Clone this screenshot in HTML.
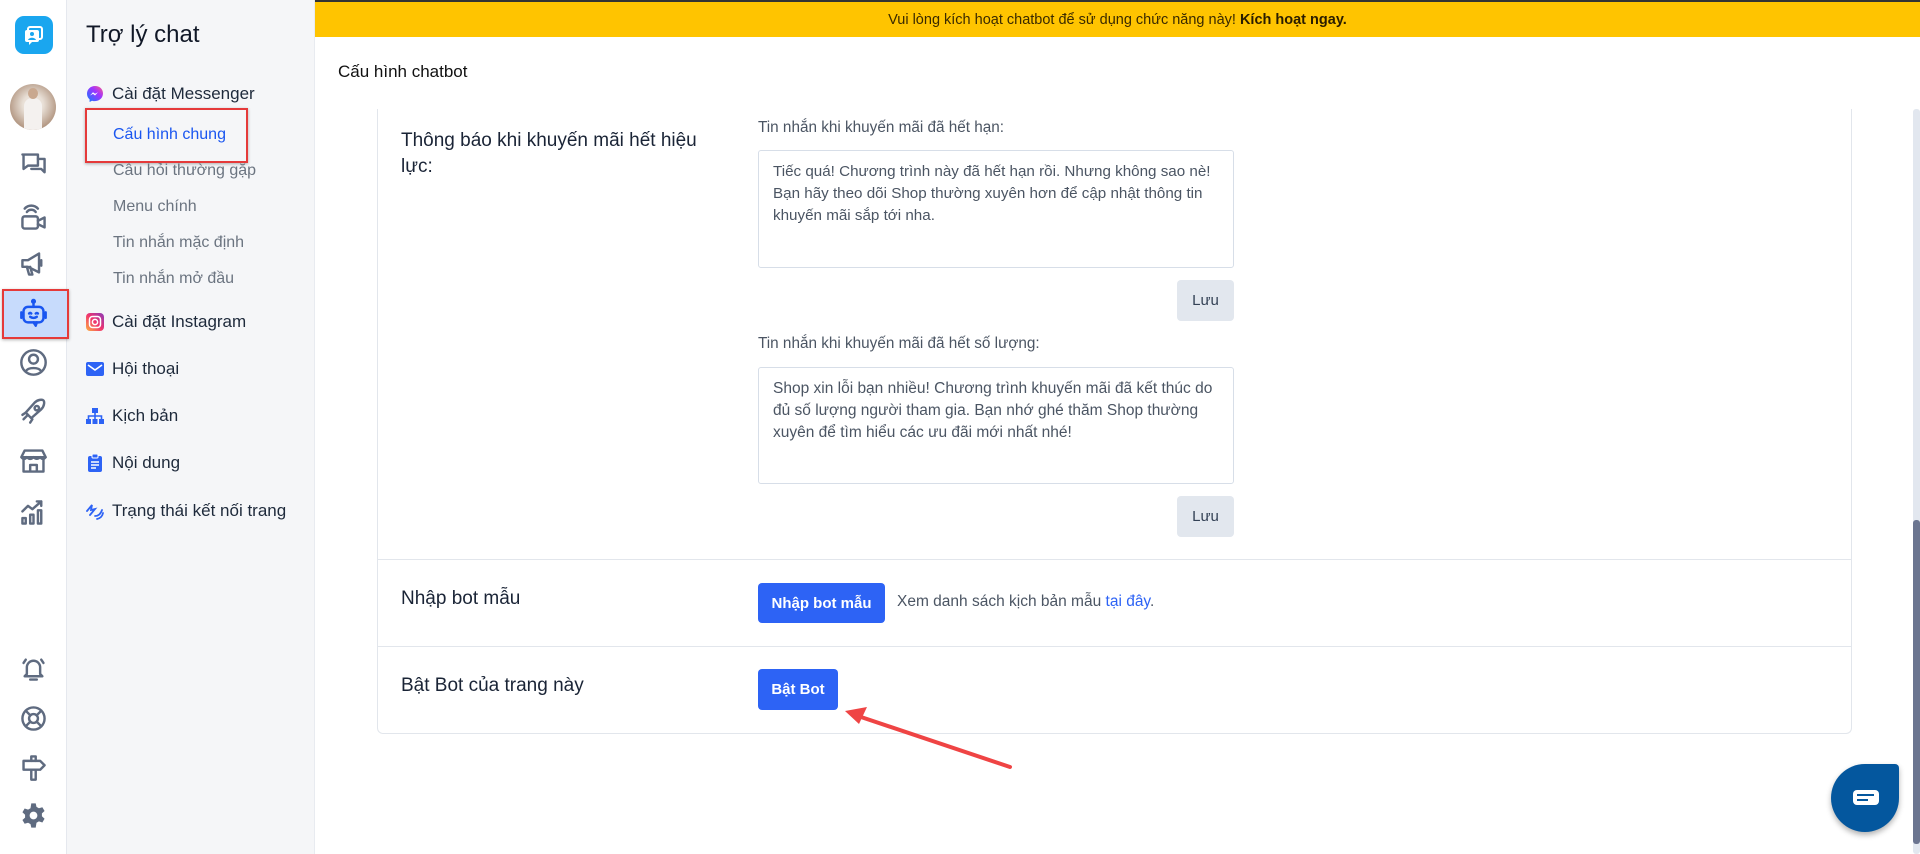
<!DOCTYPE html>
<html><head><meta charset="utf-8">
<style>
*{box-sizing:border-box;margin:0;padding:0}
body{width:1920px;height:854px;overflow:hidden;background:#fff;font-family:"Liberation Sans",sans-serif;position:relative;color:#1f2937}
.abs{position:absolute}
.rail{left:0;top:0;width:67px;height:854px;background:#fff;border-right:1px solid #e5e8ee}
.side{left:67px;top:0;width:248px;height:854px;background:#f5f6f8;border-right:1px solid #e8ebf0}
.ic{position:absolute;left:18px;width:31px;height:31px}
.ic svg{width:31px;height:31px;fill:none;stroke:#5f6b80;stroke-width:2.2;stroke-linecap:round;stroke-linejoin:round}
.mi{position:absolute;left:86px;font-size:17px;color:#1e2a3b;display:flex;align-items:center;gap:8px;white-space:nowrap}
.mi .i{width:18px;height:18px;display:inline-block}
.sub{position:absolute;left:113px;font-size:16px;color:#6b7480}
.lbl{font-size:15.3px;color:#4b5563}
.ta{position:absolute;border:1px solid #d7dee8;border-radius:3px;padding:10px 14px;font-size:15.5px;line-height:22px;color:#4b5563;white-space:nowrap}
.lu{position:absolute;width:57px;height:41px;background:#e2e7ee;border-radius:4px;font-size:15px;color:#334155;display:flex;align-items:center;justify-content:center}
.btn{position:absolute;background:#2d63f5;color:#fff;font-weight:bold;font-size:15px;border-radius:4px;display:flex;align-items:center;justify-content:center}
.rowlbl{position:absolute;left:401px;font-size:19px;color:#1a2436}
</style></head><body>
<div class="abs" style="left:0;top:0;width:1920px;height:2px;background:#333"></div>
<div class="abs rail"></div>
<div class="abs side"></div>

<div class="abs" style="left:15px;top:16px;width:38px;height:38px;border-radius:9px;background:#1aa6ef"></div>
<svg class="abs" style="left:21px;top:22px" width="26" height="26" viewBox="0 0 26 26"><rect x="7" y="5" width="14" height="12" rx="2" fill="none" stroke="#fff" stroke-width="2"/><rect x="4" y="8" width="14" height="12" rx="2" fill="#fff"/><path d="M8 20l0 3 3-3" fill="#fff"/><circle cx="11" cy="12" r="2" fill="#1aa6ef"/><path d="M7 18c1-3 7-3 8 0" fill="#1aa6ef"/></svg>
<div class="abs" style="left:10px;top:84px;width:46px;height:46px;border-radius:50%;background:radial-gradient(circle at 50% 45%,#f3ece6 0,#e8dfd6 30%,#b59a86 70%,#8d7565 100%);overflow:hidden"><div style="position:absolute;left:14px;top:14px;width:18px;height:34px;background:#f4f1ef;border-radius:8px 8px 0 0"></div><div style="position:absolute;left:18px;top:4px;width:10px;height:11px;background:#c9a88f;border-radius:50%"></div></div>

<div class="abs" style="left:2px;top:289px;width:67px;height:50px;background:#c7dbfc;border:2px solid #e53a3a;box-shadow:0 1px 3px rgba(0,0,0,.3)"></div>

<div class="ic" style="top:149px"><svg viewBox="0 0 28 28"><path d="M4 5h14v10H9l-4 3V5z"/><path d="M18 9h6v12l-3-3h-9"/></svg></div>
<div class="ic" style="top:202px"><svg viewBox="0 0 28 28"><path d="M8 9a5 5 0 0 1 8 0M6 6a8 8 0 0 1 12 0"/><rect x="4" y="13" width="14" height="11" rx="2"/><path d="M18 17l6-3v9l-6-3"/></svg></div>
<div class="ic" style="top:248px"><svg viewBox="0 0 28 28"><path d="M4 11h5l10-6v17l-10-5H4z"/><path d="M8 17l2 7h3l-2-7"/><path d="M21 11v5"/></svg></div>
<div class="ic" style="top:298px"><svg viewBox="0 0 28 28" style="stroke:#1a56f0"><rect x="5" y="8" width="18" height="14" rx="4"/><path d="M14 8V4"/><circle cx="14" cy="3" r="1.2"/><path d="M3 13v5M25 13v5M10 14q1-1 2 0M16 14q1-1 2 0M11 17q3 2 6 0M14 22l2 3 1-3"/></svg></div>
<div class="ic" style="top:347px"><svg viewBox="0 0 28 28"><circle cx="14" cy="14" r="11"/><circle cx="14" cy="11" r="4"/><path d="M7 22c2-4 12-4 14 0"/></svg></div>
<div class="ic" style="top:396px"><svg viewBox="0 0 28 28"><path d="M10 18l-3-3 8-9c3-3 7-3 8-2 1 1 1 5-2 8l-9 8z"/><circle cx="17" cy="11" r="2"/><path d="M5 21l4-4M4 17l3-2M11 24l2-3"/></svg></div>
<div class="ic" style="top:445px"><svg viewBox="0 0 28 28"><path d="M3 11l3-6h16l3 6zM3 11q2.5 3 5 0q3 3 6 0q3 3 6 0q2.5 3 5 0"/><path d="M5 13v11h18V13M11 24v-6h6v6"/></svg></div>
<div class="ic" style="top:497px"><svg viewBox="0 0 28 28"><rect x="4" y="19" width="3" height="5"/><rect x="11" y="16" width="3" height="8"/><rect x="18" y="12" width="3" height="12"/><path d="M4 13l5-5 4 3 8-7M17 4h4v4"/></svg></div>

<div class="ic" style="top:653px"><svg viewBox="0 0 28 28"><path d="M8 19v-6a6 6 0 0 1 12 0v6l2 2H6z"/><path d="M11 24h6M5 9l2-3M23 9l-2-3"/></svg></div>
<div class="ic" style="top:703px"><svg viewBox="0 0 28 28"><circle cx="14" cy="14" r="10"/><circle cx="14" cy="14" r="4"/><path d="M7 7l4 4M21 7l-4 4M7 21l4-4M21 21l-4-4"/></svg></div>
<div class="ic" style="top:752px"><svg viewBox="0 0 28 28"><path d="M5 8h15l4 4-4 4H5z"/><path d="M12 16v9h4v-9M12 8V4h4v4"/></svg></div>
<div class="ic" style="top:800px"><svg viewBox="0 0 28 28"><path fill="#5f6b80" stroke="none" fill-rule="evenodd" d="M12 3h4l.7 3.2 2.2 1.3 3.1-1 2 3.4-2.4 2.2v2.6l2.4 2.2-2 3.4-3.1-1-2.2 1.3L16 25h-4l-.7-3.2-2.2-1.3-3.1 1-2-3.4 2.4-2.2v-2.6L4 11.1l2-3.4 3.1 1 2.2-1.3zM14 10.5a3.5 3.5 0 1 0 0 7 3.5 3.5 0 0 0 0-7z"/></svg></div>

<div class="abs" style="left:86px;top:21px;font-size:24px;color:#111827">Trợ lý chat</div>
<div class="mi" style="top:84px"><svg class="i" viewBox="0 0 18 18"><defs><linearGradient id="g" x1="0" y1="1" x2="1" y2="0"><stop offset="0" stop-color="#0a7cff"/><stop offset=".6" stop-color="#a033ff"/><stop offset="1" stop-color="#ff5c87"/></linearGradient></defs><path d="M9 1C4.5 1 1 4.3 1 8.7c0 2.3 1 4.3 2.6 5.7V17l2.4-1.3c.9.3 1.9.4 3 .4 4.5 0 8-3.3 8-7.7S13.5 1 9 1z" fill="url(#g)"/><path d="M4 10.5l3-3.3 2 1.6 3-1.6-3 3.3-2-1.6z" fill="#fff"/></svg>Cài đặt Messenger</div>
<div class="abs" style="left:85px;top:108px;width:163px;height:55px;border:2px solid #e53a3a;box-shadow:0 1px 3px rgba(0,0,0,.3)"></div>
<div class="sub" style="top:126px;color:#1a56f0">Cấu hình chung</div>
<div class="sub" style="top:162px">Câu hỏi thường gặp</div>
<div class="sub" style="top:198px">Menu chính</div>
<div class="sub" style="top:234px">Tin nhắn mặc định</div>
<div class="sub" style="top:270px">Tin nhắn mở đầu</div>
<div class="mi" style="top:312px"><svg class="i" viewBox="0 0 18 18"><defs><linearGradient id="ig" x1="0" y1="1" x2="1" y2="0"><stop offset="0" stop-color="#fdb241"/><stop offset=".5" stop-color="#f0346e"/><stop offset="1" stop-color="#8a3ab9"/></linearGradient></defs><rect x="0" y="0" width="18" height="18" rx="4" fill="url(#ig)"/><rect x="3.5" y="3.5" width="11" height="11" rx="3" fill="none" stroke="#fff" stroke-width="1.5"/><circle cx="9" cy="9" r="2.6" fill="none" stroke="#fff" stroke-width="1.5"/></svg>Cài đặt Instagram</div>
<div class="mi" style="top:359px"><svg class="i" viewBox="0 0 18 18"><rect x="0" y="2" width="18" height="14" rx="2" fill="#2d63f5"/><path d="M2 5l7 5 7-5" fill="none" stroke="#fff" stroke-width="1.6"/></svg>Hội thoại</div>
<div class="mi" style="top:406px"><svg class="i" viewBox="0 0 18 18" fill="#2d63f5"><rect x="6" y="1" width="6" height="5"/><rect x="0" y="12" width="5" height="5"/><rect x="6.5" y="12" width="5" height="5"/><rect x="13" y="12" width="5" height="5"/><path d="M9 6v6M2.5 12V9h13v3" stroke="#2d63f5" stroke-width="1.6" fill="none"/></svg>Kịch bản</div>
<div class="mi" style="top:453px"><svg class="i" viewBox="0 0 18 18"><rect x="2" y="2" width="14" height="16" rx="2" fill="#2d63f5"/><rect x="6" y="0" width="6" height="4" rx="1" fill="#2d63f5" stroke="#fff"/><path d="M5 8h8M5 11h8M5 14h5" stroke="#fff" stroke-width="1.5"/></svg>Nội dung</div>
<div class="mi" style="top:501px"><svg class="i" viewBox="0 0 18 18" fill="none" stroke="#2d63f5" stroke-width="1.8" stroke-linecap="round"><path d="M1 9l5-6-1 5 4-1-5 6"/><path d="M9 14q5 0 7-6M11 17q5-1 6-6"/></svg>Trạng thái kết nối trang</div>

<div class="abs" style="left:315px;top:2px;width:1605px;height:35px;background:#ffc400;font-size:14.5px;color:#3a2a00;display:flex;align-items:center;justify-content:center">Vui lòng kích hoạt chatbot để sử dụng chức năng này!&nbsp;<b style="color:#2a1d00">Kích hoạt ngay.</b></div>
<div class="abs" style="left:338px;top:62px;font-size:17px;color:#111">Cấu hình chatbot</div>

<div class="abs" style="left:377px;top:109px;width:1475px;height:625px;border:1px solid #e2e6ec;border-top:none;border-radius:0 0 6px 6px"></div>
<div class="abs" style="left:377px;top:559px;width:1475px;height:1px;background:#e2e6ec"></div>
<div class="abs" style="left:377px;top:646px;width:1475px;height:1px;background:#e2e6ec"></div>

<div class="rowlbl" style="top:128px;line-height:26px;width:340px">Thông báo khi khuyến mãi hết hiệu<br>lực:</div>
<div class="abs lbl" style="left:758px;top:119px">Tin nhắn khi khuyến mãi đã hết hạn:</div>
<div class="ta" style="left:758px;top:150px;width:476px;height:118px;font-size:15.2px">Tiếc quá! Chương trình này đã hết hạn rồi. Nhưng không sao nè!<br>Bạn hãy theo dõi Shop thường xuyên hơn để cập nhật thông tin<br>khuyến mãi sắp tới nha.</div>
<div class="lu" style="left:1177px;top:280px">Lưu</div>
<div class="abs lbl" style="left:758px;top:335px">Tin nhắn khi khuyến mãi đã hết số lượng:</div>
<div class="ta" style="left:758px;top:367px;width:476px;height:117px">Shop xin lỗi bạn nhiều! Chương trình khuyến mãi đã kết thúc do<br>đủ số lượng người tham gia. Bạn nhớ ghé thăm Shop thường<br>xuyên để tìm hiểu các ưu đãi mới nhất nhé!</div>
<div class="lu" style="left:1177px;top:496px">Lưu</div>

<div class="rowlbl" style="top:588px">Nhập bot mẫu</div>
<div class="btn" style="left:758px;top:583px;width:127px;height:40px">Nhập bot mẫu</div>
<div class="abs" style="left:897px;top:593px;font-size:15.5px;color:#4b5563">Xem danh sách kịch bản mẫu <span style="color:#2d63f5">tại đây</span>.</div>

<div class="rowlbl" style="top:675px">Bật Bot của trang này</div>
<div class="btn" style="left:758px;top:669px;width:80px;height:41px">Bật Bot</div>

<svg class="abs" style="left:0;top:0" width="1920" height="854"><line x1="1010" y1="767" x2="858" y2="716" stroke="#ef4444" stroke-width="4" stroke-linecap="round"/><path d="M845 711l22-4-8 17z" fill="#ef4444"/></svg>

<div class="abs" style="left:1913px;top:109px;width:7px;height:745px;background:#e2e7ef;border-radius:3px"></div>
<div class="abs" style="left:1913px;top:520px;width:7px;height:324px;background:#6b7590;border-radius:3px"></div>

<div class="abs" style="left:1831px;top:764px;width:68px;height:68px;background:#04579e;border-radius:50% 4px 50% 50%;box-shadow:0 3px 6px rgba(0,0,0,.3)"></div>
<div class="abs" style="left:1853px;top:790px;width:26px;height:15px;background:#fff;border-radius:4px"></div>
<div class="abs" style="left:1857px;top:794px;width:17px;height:2px;background:#04579e"></div>
<div class="abs" style="left:1857px;top:799px;width:11px;height:2px;background:#04579e"></div>
</body></html>
